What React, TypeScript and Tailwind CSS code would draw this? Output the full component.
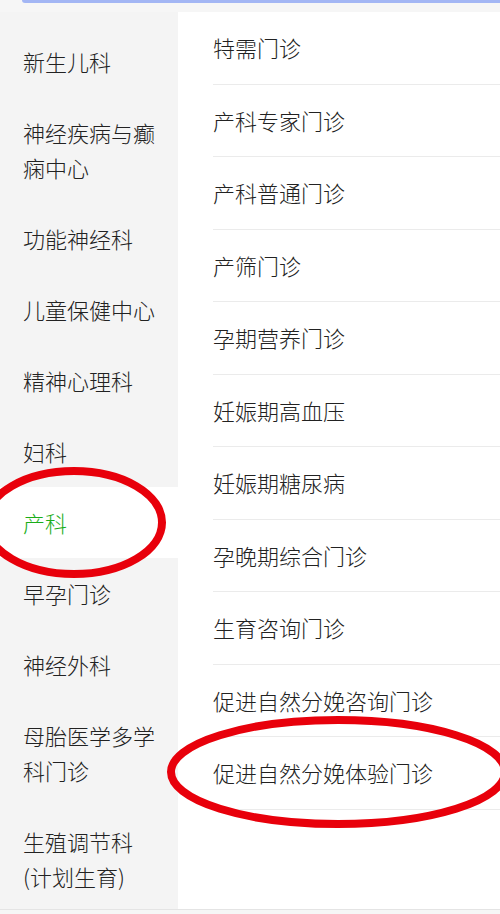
import React from "react";

const left: { label: string[]; active?: boolean }[] = [
  { label: ["新生儿科"] },
  { label: ["神经疾病与癫", "痫中心"] },
  { label: ["功能神经科"] },
  { label: ["儿童保健中心"] },
  { label: ["精神心理科"] },
  { label: ["妇科"] },
  { label: ["产科"], active: true },
  { label: ["早孕门诊"] },
  { label: ["神经外科"] },
  { label: ["母胎医学多学", "科门诊"] },
  { label: ["生殖调节科", "(计划生育)"] },
];

const right = [
  "特需门诊",
  "产科专家门诊",
  "产科普通门诊",
  "产筛门诊",
  "孕期营养门诊",
  "妊娠期高血压",
  "妊娠期糖尿病",
  "孕晚期综合门诊",
  "生育咨询门诊",
  "促进自然分娩咨询门诊",
  "促进自然分娩体验门诊",
];

export default function App() {
  return (
    <div
      className="relative w-[500px] h-[914px] overflow-hidden bg-[#f6f6f6] font-light"
      style={{ fontFamily: '"Noto Sans CJK SC", "Noto Sans", sans-serif' }}
    >
      <div className="h-[12px]">
        <div className="ml-[22px] h-[3px] bg-[#a3b6f4] rounded-bl-[6px]" />
      </div>
      <div className="flex h-[898px] overflow-hidden border-b border-[#e4e4e4]">
        <div className="w-[178px] shrink-0 bg-[#f4f4f4] pt-[14px]">
          {left.map((it, i) => (
            <div
              key={i}
              className={`pl-[23px] py-[18px] text-[22px] leading-[35px] ${
                it.active ? "bg-white text-[#1aad19]" : "text-[#222222]"
              }`}
            >
              {it.label.map((l, j) => (
                <div key={j} className="whitespace-nowrap">
                  {l}
                </div>
              ))}
            </div>
          ))}
        </div>
        <div className="flex-1 bg-white">
          {right.map((r, i) => (
            <div key={i} className="pl-[35px]">
              <div className="h-[72.5px] flex items-center border-b border-[#ebebeb] text-[22px] text-[#222222] whitespace-nowrap">
                {r}
              </div>
            </div>
          ))}
        </div>
      </div>
      <svg
        className="absolute left-0 top-0 pointer-events-none"
        width="500"
        height="914"
        viewBox="0 0 500 914"
      >
        <ellipse cx="74" cy="522.5" rx="88" ry="51.5" fill="none" stroke="#e8000b" strokeWidth="8" />
        <ellipse cx="338" cy="772" rx="167" ry="52" fill="none" stroke="#e8000b" strokeWidth="8" />
      </svg>
    </div>
  );
}
